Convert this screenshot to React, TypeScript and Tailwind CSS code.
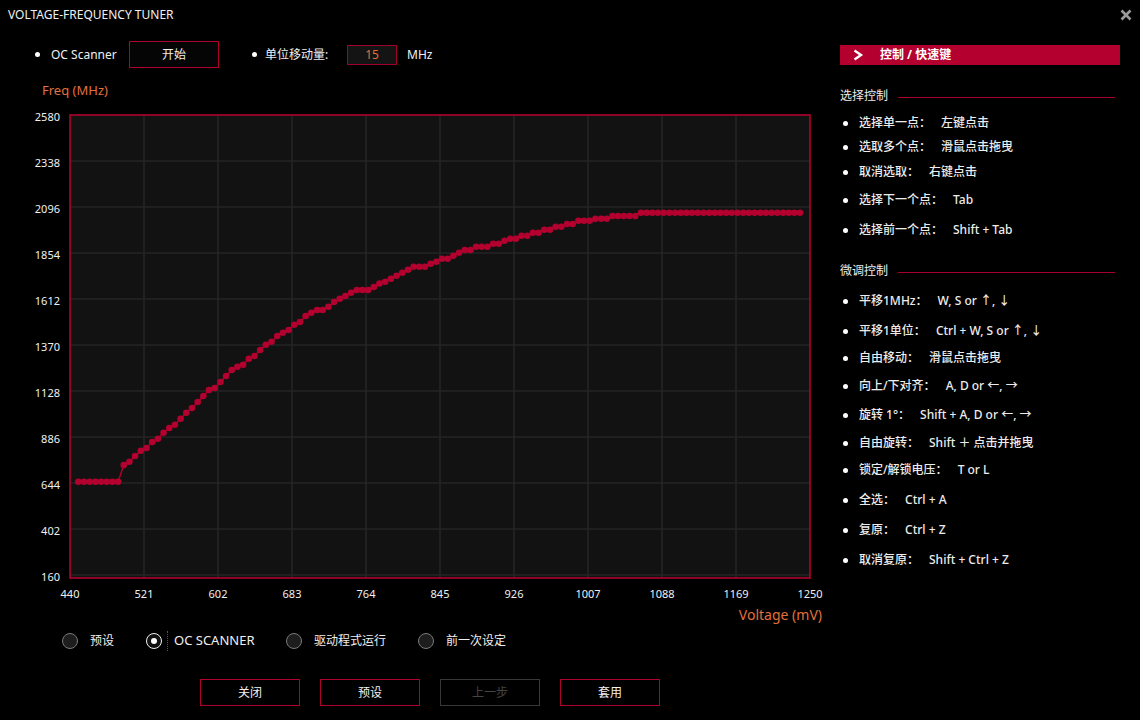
import React from "react";

const CRIMSON = "#b3002f";

const flat8 = Array(8).fill(481.7);
const mid = [
  465, 461.7, 456, 450.7, 448, 442, 438.7, 432.7, 428, 424.7, 418.7, 412.7, 408, 402, 396, 390, 388, 382, 376, 370,
  366.7, 364.7, 358.7, 356, 350, 344.7, 341.7, 336, 332.7, 330, 324.7, 322, 316, 312.7, 310, 310, 306.7, 302, 298.7,
  296, 292.7, 290, 290, 290, 287, 283.5, 281.7, 278.7, 275.7, 272.7, 269.7, 266.7, 266.7, 266.7, 263.7, 261.7, 258.7,
  258.7, 255.7, 252.7, 250, 250, 246.7, 246.7, 246.7, 243.7, 243.7, 240.7, 238.7, 238.7, 235.7, 235.7, 232.7, 232.7,
  229.7, 229.7, 226.7, 226.7, 224, 224, 220.7, 220.7, 220.7, 218.7, 218.7, 218.7, 216, 216, 216, 216, 216,
];
const tail = Array(29).fill(212.7);
const YS = [...flat8, ...mid, ...tail];
const PTS = YS.map((y, i) => ({ x: 78.3 + i * 5.683, y }));

const yLabels = ["2580", "2338", "2096", "1854", "1612", "1370", "1128", "886", "644", "402", "160"];
const xLabels = ["440", "521", "602", "683", "764", "845", "926", "1007", "1088", "1169", "1250"];

function Chart() {
  return (
    <svg width={830} height={507} viewBox="0 98 830 507" className="block">
      <rect x={70} y={115} width={740} height={463} fill="#121212" />
      {Array.from({ length: 9 }, (_, k) => (
        <line key={"v" + k} x1={144 + k * 74} x2={144 + k * 74} y1={115} y2={578} stroke="#252525" strokeWidth={1.6} />
      ))}
      {Array.from({ length: 10 }, (_, k) => (
        <line key={"h" + k} x1={70} x2={810} y1={161 + k * 46} y2={161 + k * 46} stroke="#252525" strokeWidth={1.6} />
      ))}
      <rect x={70} y={115} width={740} height={463} fill="none" stroke="#b0002e" strokeWidth={1.6} />
      <polyline
        points={PTS.map((p) => `${p.x},${p.y}`).join(" ")}
        fill="none"
        stroke={CRIMSON}
        strokeWidth={1.4}
      />
      {PTS.map((p, i) => (
        <circle key={i} cx={p.x} cy={p.y} r={3.3} fill={CRIMSON} />
      ))}
      {yLabels.map((l, k) => (
        <text key={l} x={60} y={118 + k * 46} textAnchor="end" dominantBaseline="middle" fontSize={11} fill="#f0f0f0">
          {l}
        </text>
      ))}
      {xLabels.map((l, k) => (
        <text key={l} x={70 + k * 74} y={595} textAnchor="middle" dominantBaseline="middle" fontSize={11} fill="#f0f0f0">
          {l}
        </text>
      ))}
    </svg>
  );
}

function Radio({
  label,
  checked,
  width,
  focus,
  size,
}: {
  label: string;
  checked?: boolean;
  width: string;
  focus?: boolean;
  size: string;
}) {
  return (
    <div className={`flex items-center ${width}`}>
      {checked ? (
        <div className="w-[16px] h-[16px] rounded-full border-[1.5px] border-[#f0f0f0] bg-[#111] flex items-center justify-center">
          <div className="w-[6px] h-[6px] rounded-full bg-white" />
        </div>
      ) : (
        <div className="w-[16px] h-[16px] rounded-full border border-[#7a7a7a] bg-[#1d1d1d]" />
      )}
      {focus ? (
        <div className={`ml-[5px] h-[20px] border-l border-dotted border-[#555] pl-[6px] ${size} text-[#f0f0f0] leading-[18px]`}>
          {label}
        </div>
      ) : (
        <div className={`ml-[12px] ${size} text-[#f0f0f0] leading-[18px]`}>{label}</div>
      )}
    </div>
  );
}

function Btn({ label, disabled }: { label: string; disabled?: boolean }) {
  return (
    <div
      className={
        disabled
          ? "w-[100px] h-[27px] border border-[#383838] text-[#454545] text-[12px] flex items-center justify-center"
          : "w-[100px] h-[27px] border border-[#b0002e] text-[#f2f2f2] text-[12px] flex items-center justify-center"
      }
    >
      {label}
    </div>
  );
}

type Row = { mt: string; label: string; value: string };

const sec1: Row[] = [
  { mt: "mt-[9px]", label: "选择单一点：", value: "左键点击" },
  { mt: "mt-[4px]", label: "选取多个点：", value: "滑鼠点击拖曳" },
  { mt: "mt-[5px]", label: "取消选取：", value: "右键点击" },
  { mt: "mt-[8px]", label: "选择下一个点：", value: "Tab" },
  { mt: "mt-[10px]", label: "选择前一个点：", value: "Shift + Tab" },
];

const sec2: Row[] = [
  { mt: "mt-[12px]", label: "平移1MHz：", value: "W, S or ↑, ↓" },
  { mt: "mt-[10px]", label: "平移1单位：", value: "Ctrl + W, S or ↑, ↓" },
  { mt: "mt-[7px]", label: "自由移动：", value: "滑鼠点击拖曳" },
  { mt: "mt-[8px]", label: "向上/下对齐：", value: "A, D or ←, →" },
  { mt: "mt-[9px]", label: "旋转 1°：", value: "Shift + A, D or ←, →" },
  { mt: "mt-[8px]", label: "自由旋转：", value: "Shift ＋ 点击并拖曳" },
  { mt: "mt-[7px]", label: "锁定/解锁电压：", value: "T or L" },
  { mt: "mt-[10px]", label: "全选：", value: "Ctrl + A" },
  { mt: "mt-[10px]", label: "复原：", value: "Ctrl + Z" },
  { mt: "mt-[10px]", label: "取消复原：", value: "Shift + Ctrl + Z" },
];

function ShortcutRow({ r }: { r: Row }) {
  return (
    <div className={`${r.mt} h-[20px] flex items-center text-[12px] font-medium text-[#ececec]`}>
      <div className="ml-[3px] w-[5px] h-[5px] rounded-full bg-white" />
      <span className="ml-[11px]">{r.label}</span>
      <span className="ml-[10px]">{r.value}</span>
    </div>
  );
}

function SectionHead({ title, mt }: { title: string; mt: string }) {
  return (
    <div className={`${mt} h-[16px] flex items-center text-[12px] text-[#ececec]`}>
      <span>{title}</span>
      <div className="ml-[10px] mt-[3px] w-[217px] h-[1.5px] bg-[#a8002d]" />
    </div>
  );
}

export default function App() {
  return (
    <div className="w-[1140px] h-[720px] bg-black text-white overflow-hidden font-['Noto_Sans','Noto_Sans_CJK_SC',sans-serif]">
      <div className="h-[30px] flex items-center justify-between pl-[8px] pr-[8px]">
        <span className="text-[12px] text-[#f0f0f0]">VOLTAGE-FREQUENCY TUNER</span>
        <svg width="12" height="12" viewBox="0 0 12 12">
          <path d="M1.5 1.5 L10.5 10.5 M10.5 1.5 L1.5 10.5" stroke="#9a9a9a" strokeWidth="2.6" />
        </svg>
      </div>
      <div className="flex">
        <div className="w-[830px] shrink-0 flex flex-col">
          <div className="mt-[11px] h-[27px] flex items-center text-[12px] text-[#f0f0f0]">
            <div className="ml-[35px] w-[5px] h-[5px] rounded-full bg-white" />
            <span className="ml-[11px] w-[78px]">OC Scanner</span>
            <div className="w-[90px] h-[27px] border border-[#b0002e] bg-[#050505] flex items-center justify-center">
              开始
            </div>
            <div className="ml-[33px] w-[5px] h-[5px] rounded-full bg-white" />
            <span className="ml-[8px] w-[82px]">单位移动量:</span>
            <div className="w-[50px] h-[20px] border border-[#a0002c] bg-[#141414] flex items-center justify-center text-[#e2703c]">
              15
            </div>
            <span className="ml-[10px]">MHz</span>
          </div>
          <div className="mt-[14px] h-[16px] leading-[16px] pl-[42px] text-[13px] text-[#e2703c]">Freq (MHz)</div>
          <Chart />
          <div className="mt-[2px] h-[16px] leading-[16px] flex justify-end pr-[8px] text-[14px] text-[#e2703c]">
            Voltage (mV)
          </div>
          <div className="mt-[9px] h-[18px] flex items-center pl-[62px]">
            <Radio label="预设" size="text-[12px]" width="w-[84px]" />
            <Radio label="OC SCANNER" size="text-[13px]" checked focus width="w-[140px]" />
            <Radio label="驱动程式运行" size="text-[12px]" width="w-[132px]" />
            <Radio label="前一次设定" size="text-[12px]" width="w-[140px]" />
          </div>
          <div className="mt-[29px] flex gap-[20px] pl-[200px]">
            <Btn label="关闭" />
            <Btn label="预设" />
            <Btn label="上一步" disabled />
            <Btn label="套用" />
          </div>
        </div>
        <div className="ml-[10px] w-[280px] flex flex-col">
          <div className="mt-[15px] h-[20px] bg-[#b4002f] flex items-center">
            <svg width="12" height="12" viewBox="0 0 12 12" className="ml-[12px]">
              <path d="M2.5 1.5 L9 6 L2.5 10.5" fill="none" stroke="#fff" strokeWidth="2.4" />
            </svg>
            <span className="ml-[16px] text-[12px] font-bold text-white">控制 / 快速键</span>
          </div>
          <SectionHead title="选择控制" mt="mt-[23px]" />
          {sec1.map((r) => (
            <ShortcutRow key={r.label} r={r} />
          ))}
          <SectionHead title="微调控制" mt="mt-[23px]" />
          {sec2.map((r) => (
            <ShortcutRow key={r.label} r={r} />
          ))}
        </div>
      </div>
    </div>
  );
}
